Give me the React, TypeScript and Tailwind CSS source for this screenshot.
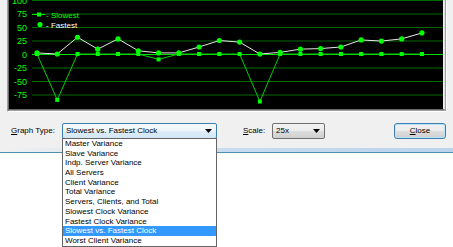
import React from 'react';

const slowest = [0, -85, 0, 0, 0, 0, -10, 0, 0, 0, 0, -88, 0, 0, 0, 0, 0, 0, 0, 0];
const fastest = [2, 0, 31, 9, 28, 6, 2, 2, 13, 25, 22, 0, 3, 9, 10, 13, 26, 24, 28, 39];
const ticks = [100, 75, 50, 25, 0, -25, -50, -75];

const graphTypes = [
  'Master Variance',
  'Slave Variance',
  'Indp. Server Variance',
  'All Servers',
  'Client Variance',
  'Total Variance',
  'Servers, Clients, and Total',
  'Slowest Clock Variance',
  'Fastest Clock Variance',
  'Slowest vs. Fastest Clock',
  'Worst Client Variance',
];

// chart coordinates, relative to the black plot area
const px = (i: number) => 28 + i * 20.26;
const py = (v: number) => 54 - v * 0.54;

const ClockChart = () => {
  const slowPts = slowest.map((v, i) => `${px(i)},${py(v)}`).join(' ');
  const fastPts = fastest.map((v, i) => `${px(i)},${py(v)}`).join(' ');

  return (
    <svg width="434" height="109" className="block bg-black">
      {ticks.map(t => (
        <g key={t}>
          <line
            x1={23}
            x2={434}
            y1={py(t) + 0.5}
            y2={py(t) + 0.5}
            stroke={t === 0 ? '#00e000' : '#006a00'}
            strokeWidth={1}
          />
          <text
            x={18}
            y={py(t) + 3.5}
            textAnchor="end"
            fontSize="9"
            fontFamily="'Liberation Sans', Arial, sans-serif"
            fill="#00ff00"
          >
            {t}
          </text>
        </g>
      ))}

      {/* Legend */}
      <line x1={23} x2={36} y1={14.5} y2={14.5} stroke="#00e000" />
      <rect x={28} y={12.5} width={4} height={4} fill="#00ff00" />
      <text x={37} y={17.5} fontSize="8" fontFamily="'Liberation Sans', Arial, sans-serif" fill="#00ff00">
        - Slowest
      </text>
      <circle cx={31} cy={24.5} r={2.6} fill="#00ff00" />
      <text x={37} y={27.5} fontSize="8" fontFamily="'Liberation Sans', Arial, sans-serif" fill="#ffffff">
        - Fastest
      </text>

      {/* Fastest clock */}
      <polyline points={fastPts} fill="none" stroke="#e8e8e8" strokeWidth={1} />
      {fastest.map((v, i) => (
        <circle key={i} cx={px(i)} cy={py(v)} r={2.6} fill="#00ff00" />
      ))}

      {/* Slowest clock */}
      <polyline points={slowPts} fill="none" stroke="#00d000" strokeWidth={1} />
      {slowest.map((v, i) => (
        <rect key={i} x={px(i) - 2} y={py(v) - 2} width={4} height={4} fill="#00ff00" />
      ))}
    </svg>
  );
};

const Arrow = () => (
  <svg width="7" height="4" className="block">
    <polygon points="0,0 7,0 3.5,4" fill="#000" />
  </svg>
);

export default function App() {
  return (
    <div className="relative w-[453px] h-[247px] overflow-hidden bg-white text-[8px] leading-none text-black font-['Liberation_Sans',Arial,sans-serif]">
      <div className="bg-[#f0f0f0] pb-[9px]">
        {/* sunken chart frame */}
        <div className="ml-[7px] w-[440px] border-l border-r border-b border-l-[#a0a0a0] border-r-white border-b-white">
          <div className="border-l border-r border-b border-l-[#696969] border-r-[#a0a0a0] border-b-[#a0a0a0]">
            <div className="border-r border-b border-r-[#e3e3e3] border-b-[#696969]">
              <ClockChart />
            </div>
          </div>
        </div>

        {/* controls */}
        <div className="mt-[11px] flex h-[16px] items-center pl-[11px]">
          <span className="w-[51px]">
            <span className="underline underline-offset-1">G</span>raph Type:
          </span>
          <div className="flex h-[16px] w-[155px] items-center justify-between rounded-[2px] border border-[#3c7fb1] bg-[linear-gradient(to_bottom,#f6fafd_0%,#eef5fb_50%,#dfedf8_50%,#d2e6f5_100%)] pl-[3px] pr-[4px]">
            <span>Slowest vs. Fastest Clock</span>
            <Arrow />
          </div>
          <span className="ml-[26px] w-[29px]">
            <span className="underline underline-offset-1">S</span>cale:
          </span>
          <div className="flex h-[16px] w-[53px] items-center justify-between rounded-[2px] border border-[#707070] bg-[linear-gradient(to_bottom,#f2f2f2_0%,#ebebeb_50%,#dddddd_50%,#cfcfcf_100%)] pl-[3px] pr-[4px]">
            <span>25x</span>
            <Arrow />
          </div>
          <button className="ml-[69px] flex h-[16px] w-[52px] items-center justify-center rounded-[3px] border border-[#3c7fb1] bg-[linear-gradient(to_bottom,#f2f2f2_0%,#ebebeb_50%,#dddddd_50%,#cfcfcf_100%)] shadow-[inset_0_0_0_1px_#b8e4fa]">
            <span>
              <span className="underline underline-offset-1">C</span>lose
            </span>
          </button>
        </div>
      </div>

      {/* window bottom edge */}
      <div className="h-[4px] bg-[linear-gradient(to_right,#f0f0f0_0%,#c9dcef_50%,#bcd3ea_100%)]" />
      <div className="h-[1px] bg-[#4e8fad]" />

      {/* open drop-down list */}
      <div className="absolute left-[62px] top-[138px] z-10 w-[155px] border border-[#646464] bg-white">
        {graphTypes.map(t => (
          <div
            key={t}
            className={
              t === 'Slowest vs. Fastest Clock'
                ? 'h-[9.7px] bg-[#3399ff] pl-[2px] leading-[9.7px] text-white'
                : 'h-[9.7px] pl-[2px] leading-[9.7px]'
            }
          >
            {t}
          </div>
        ))}
      </div>
    </div>
  );
}
